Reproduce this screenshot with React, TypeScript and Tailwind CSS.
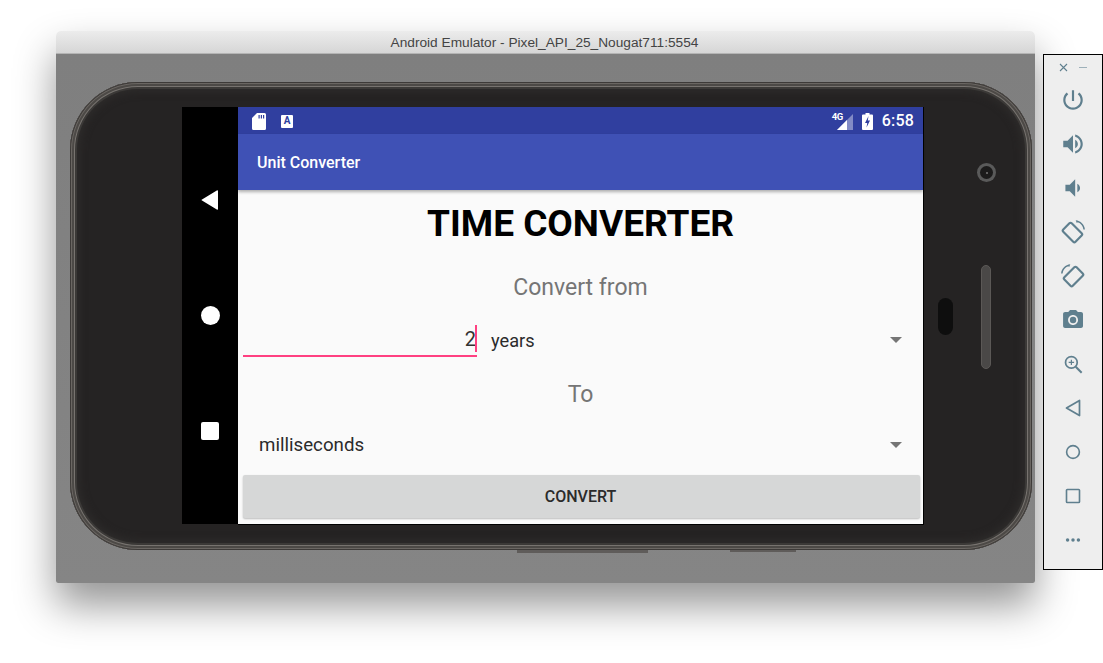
import type { ReactNode } from "react";

const roboto = "font-['Roboto',sans-serif]";

function ToolIcon({ children }: { children: ReactNode }) {
  return (
    <div className="flex h-[44px] items-center justify-center text-[#5f7f8e]">
      <svg width="26" height="26" viewBox="0 0 24 24" fill="currentColor">
        {children}
      </svg>
    </div>
  );
}

function Toolbar() {
  return (
    <div className="absolute left-[1043px] top-[54px] flex h-[516px] w-[60px] flex-col border border-black bg-[#eeeeee] pt-[2px]">
      <div className="flex h-[21px] items-center justify-center gap-[11px] text-[#5f7f8e]">
        <svg width="9" height="9" viewBox="0 0 9 9" stroke="currentColor" strokeWidth="1.1">
          <path d="M1 1l7 7M8 1L1 8" />
        </svg>
        <div className="h-[1.5px] w-[8px] bg-[#9db0b9]" />
      </div>
      <ToolIcon>
        <path d="M13 3h-2v10h2V3zm4.83 2.17l-1.42 1.42C17.99 7.86 19 9.81 19 12c0 3.87-3.13 7-7 7s-7-3.13-7-7c0-2.19 1.01-4.14 2.58-5.42L6.17 5.17C4.23 6.82 3 9.26 3 12c0 4.97 4.03 9 9 9s9-4.03 9-9c0-2.74-1.23-5.18-3.17-6.83z" />
      </ToolIcon>
      <ToolIcon>
        <path d="M3 9v6h4l5 5V4L7 9H3zm13.5 3c0-1.77-1.02-3.29-2.5-4.03v8.05c1.48-.73 2.5-2.25 2.5-4.02zM14 3.23v2.06c2.89.86 5 3.54 5 6.71s-2.11 5.85-5 6.71v2.06c4.01-.91 7-4.49 7-8.77s-2.99-7.86-7-8.77z" />
      </ToolIcon>
      <ToolIcon>
        <path d="M18.5 12c0-1.77-1.02-3.29-2.5-4.03v8.05c1.48-.73 2.5-2.25 2.5-4.02zM5 9v6h4l5 5V4L9 9H5z" />
      </ToolIcon>
      <ToolIcon>
        <g fill="none" stroke="currentColor" strokeWidth="2">
          <rect x="6" y="4.5" width="11" height="16" rx="1.5" transform="rotate(-45 11.5 12.5)" />
        </g>
        <path d="M14.5 1.2C19 1.6 22.6 5.2 23 9.6h-1.4C21.3 6.5 19.2 4 16.4 3L15.5 3.7z" />
      </ToolIcon>
      <ToolIcon>
        <g fill="none" stroke="currentColor" strokeWidth="2">
          <rect x="7" y="4.5" width="11" height="16" rx="1.5" transform="rotate(45 12.5 12.5)" />
        </g>
        <path d="M9.5 1.2C5 1.6 1.4 5.2 1 9.6h1.4C2.7 6.5 4.8 4 7.6 3l.9.7z" />
      </ToolIcon>
      <ToolIcon>
        <g transform="translate(1 1) scale(0.92)">
          <path d="M9 2L7.17 4H4c-1.1 0-2 .9-2 2v12c0 1.1.9 2 2 2h16c1.1 0 2-.9 2-2V6c0-1.1-.9-2-2-2h-3.17L15 2H9zm3 15c-2.76 0-5-2.24-5-5s2.24-5 5-5 5 2.24 5 5-2.24 5-5 5z" />
          <circle cx="12" cy="12" r="3.2" />
        </g>
      </ToolIcon>
      <ToolIcon>
        <g fill="none" stroke="currentColor" strokeWidth="1.6">
          <circle cx="10.5" cy="10.5" r="5.4" />
          <path d="M14.5 14.5l5.500 5.500" strokeWidth="1.9" />
          <path d="M10.500 8v5M8 10.500h5" strokeWidth="1.1" />
        </g>
      </ToolIcon>
      <ToolIcon>
        <path d="M18 5L6 12l12 7z" fill="none" stroke="currentColor" strokeWidth="1.6" strokeLinejoin="round" />
      </ToolIcon>
      <ToolIcon>
        <circle cx="12" cy="12" r="5.900" fill="none" stroke="currentColor" strokeWidth="1.5" />
      </ToolIcon>
      <ToolIcon>
        <rect x="6" y="6" width="12" height="12" rx="0.8" fill="none" stroke="currentColor" strokeWidth="1.5" />
      </ToolIcon>
      <ToolIcon>
        <circle cx="7" cy="12" r="1.6" />
        <circle cx="12" cy="12" r="1.6" />
        <circle cx="17" cy="12" r="1.6" />
      </ToolIcon>
    </div>
  );
}

function NavBar() {
  return (
    <div className="flex h-[417px] w-[56px] flex-col items-center justify-between bg-black pb-[84px] pt-[83px]">
      <svg width="18" height="20" viewBox="0 0 18 20" fill="white">
        <path d="M17 1v18a.8.8 0 0 1-1.2.6L1 10.6a.7.7 0 0 1 0-1.2L15.800.4A.8.8 0 0 1 17 1z" />
      </svg>
      <div className="mb-[2px] h-[19px] w-[19px] rounded-full bg-white" />
      <div className="h-[18px] w-[18px] rounded-[2px] bg-white" />
    </div>
  );
}

function StatusBar() {
  return (
    <div className="flex h-[27px] items-center bg-[#303f9f] pl-[14px] pr-[9px] pt-[1px] text-white">
      <svg width="14" height="17" viewBox="0 0 14 17" fill="white">
        <path d="M5 0h7.500A1.500 1.500 0 0 1 14 1.500v14a1.500 1.500 0 0 1-1.500 1.500h-11A1.500 1.500 0 0 1 0 15.500V5z" />
        <path d="M6.500 2h1.200v3.500H6.500zM8.800 2H10v3.500H8.800zM11 2h1.200v3.500H11z" fill="#303f9f" />
      </svg>
      <div className={`ml-[15px] flex h-[13px] w-[12px] items-center justify-center rounded-[1px] bg-white text-[10px] font-bold leading-none text-[#303f9f] ${roboto}`}>
        A
      </div>
      <div className="relative ml-auto h-[17px] w-[21px]">
        <svg className="absolute bottom-0 right-0" width="16" height="16" viewBox="0 0 16 16">
          <path d="M16 0v16H0z" fill="white" fillOpacity="0.4" />
          <path d="M10 6v10H0z" fill="white" />
        </svg>
        <span className={`absolute left-0 top-[-1px] text-[9.500px] font-bold leading-[10px] tracking-[-0.5px] ${roboto}`}>4G</span>
      </div>
      <svg className="ml-[9px]" width="11" height="17" viewBox="0 0 11 17">
        <path d="M3.500 0h4v1.500H10a1 1 0 0 1 1 1V16a1 1 0 0 1-1 1H1a1 1 0 0 1-1-1V2.500a1 1 0 0 1 1-1h2.500z" fill="white" />
        <path d="M6.500 3L3 10h2.200L4.500 14.500 8 7.500H5.800z" fill="#303f9f" />
      </svg>
      <span className={`ml-[9px] text-[16px] font-medium leading-none tracking-[0.2px] ${roboto}`}>6:58</span>
    </div>
  );
}

function Caret() {
  return (
    <svg width="12" height="6" viewBox="0 0 12 6" fill="#757575">
      <path d="M0 0h12L6 6z" />
    </svg>
  );
}

function Screen() {
  return (
    <div className={`flex h-[418px] w-[686px] flex-col border-b border-r border-black bg-[#fafafa] ${roboto}`}>
      <StatusBar />
      <div className="z-10 flex h-[56px] items-center bg-[#3f51b5] pl-[19px] pt-[2px] text-[16px] font-medium text-white shadow-[0_2px_3px_rgba(0,0,0,0.3)]">
        Unit Converter
      </div>
      <div className="flex h-[68px] items-center justify-center text-[37px] font-bold text-black">TIME CONVERTER</div>
      <div className="flex h-[58px] items-center justify-center pt-[3px] text-[23px] text-[#757575]">Convert from</div>
      <div className="flex h-[48px]">
        <div className="relative ml-[5px] flex h-[41px] w-[234px] items-center justify-end border-b-2 border-[#ff4081] text-[20px] text-[#333333]">
          <span className="pr-[1px] pt-[7px]">2</span>
          <div className="absolute right-0 top-[9px] h-[27px] w-[2px] bg-[#ff4081]" />
        </div>
        <div className="flex flex-1 items-center pl-[14px] pr-[21px] text-[18.200px] text-[#2b2b2b]">
          <span className="flex-1 pt-[1px]">years</span>
          <Caret />
        </div>
      </div>
      <div className="flex h-[60px] items-center justify-center pt-[3px] text-[23px] text-[#757575]">To</div>
      <div className="flex h-[42px] items-center pl-[21px] pr-[21px] text-[18.700px] text-[#2b2b2b]">
        <span className="flex-1">milliseconds</span>
        <Caret />
      </div>
      <div className="mx-[5px] mt-[9px] mr-[3px] flex h-[43px] items-center justify-center rounded-[2px] bg-[#d6d7d7] pr-[2px] text-[16px] font-medium text-[#2b2b2b] shadow-[0_1px_2px_rgba(0,0,0,0.25)]">
        CONVERT
      </div>
    </div>
  );
}

function Phone() {
  return (
    <div className="absolute left-[14px] top-[51px] h-[468px] w-[962px]">
      <div className="absolute left-[447px] top-[466px] h-[5px] w-[131px] bg-[#5f5c5a]" />
      <div className="absolute left-[660px] top-[466px] h-[4px] w-[66px] bg-[#5f5c5a]" />
      <div className="relative flex h-full w-full rounded-[68px] bg-[#252323] pl-[112px] pt-[25px] shadow-[inset_0_0_0_1px_#3d3a38,inset_0_0_0_2px_#6a6662,inset_0_0_0_4px_#4c4946,inset_0_0_0_5px_#77736f,inset_0_0_0_7px_#3b3937,inset_0_0_8px_9px_#2f2d2c]">
        <NavBar />
        <Screen />
        {/* Camera, speaker and sensor on the bezel */}
        <div className="absolute left-[907px] top-[81px] flex h-[19px] w-[19px] items-center justify-center rounded-full bg-[#5a5a5a]">
          <div className="flex h-[13px] w-[13px] items-center justify-center rounded-full bg-[#1c1b1b]">
            <div className="h-[2px] w-[2px] rounded-full bg-[#777777]" />
          </div>
        </div>
        <div className="absolute left-[911px] top-[183px] h-[104px] w-[10px] rounded-full border border-[#5b5856] bg-[#4a4847]" />
        <div className="absolute left-[868px] top-[216px] h-[37px] w-[15px] rounded-[8px] bg-[#0e0e0e]" />
      </div>
    </div>
  );
}

export default function App() {
  return (
    <div className="relative h-[663px] w-[1103px] overflow-hidden bg-white">
      <div className="absolute left-[56px] top-[31px] flex h-[552px] w-[979px] flex-col overflow-hidden rounded-b-[2px] rounded-t-[5px] shadow-[0_22px_40px_rgba(0,0,0,0.42)]">
        <div className="flex h-[23px] items-center justify-center border-b border-[#b4b4b4] bg-gradient-to-b from-[#ececec] to-[#d6d6d6] pr-[2px] pt-[3px] font-['Liberation_Sans',sans-serif] text-[13.700px] text-[#444444]">
          Android Emulator - Pixel_API_25_Nougat711:5554
        </div>
        <div className="flex-1 bg-gradient-to-b from-[#7f7f7f] to-[#858585]" />
        <Phone />
      </div>
      <Toolbar />
    </div>
  );
}
